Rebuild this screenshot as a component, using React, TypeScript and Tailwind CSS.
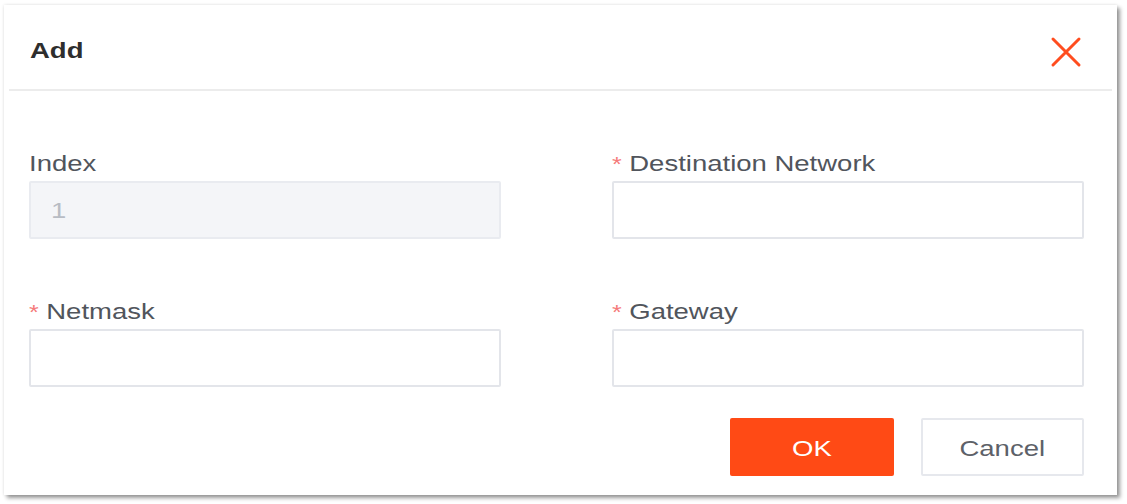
import React from "react";

const font = { fontFamily: '"Liberation Sans", Arial, sans-serif' };

interface FieldProps {
  label: string;
  required?: boolean;
  value?: string;
  disabled?: boolean;
}

const Wide = ({ children, center }: { children: React.ReactNode; center?: boolean }) => (
  <span className={`inline-block scale-x-[1.25] ${center ? "origin-center" : "origin-left"}`}>
    {children}
  </span>
);

const Field = ({ label, required, value, disabled }: FieldProps) => (
  <div className="flex flex-col">
    <label className="h-[26px] pt-[2px] text-[22px] leading-[26px] text-[#51555c] whitespace-nowrap">
      <Wide>
        {required && <span className="text-[#f57a7a] text-[20px] mr-[6px]">*</span>}
        {label}
      </Wide>
    </label>
    <div
      className={`mt-[6px] h-[58px] flex items-center pl-[20px] border-2 rounded-[2px] ${
        disabled ? "bg-[#f4f5f8] border-[#e9ebf0]" : "bg-white border-[#e3e5ea]"
      }`}
    >
      {value && (
        <span className="text-[22px] text-[#b8bcc4]">
          <Wide>{value}</Wide>
        </span>
      )}
    </div>
  </div>
);

const CloseIcon = () => (
  <svg width="32" height="32" viewBox="0 0 32 32" fill="none">
    <path d="M3 3 L29 29 M29 3 L3 29" stroke="#ff4d1f" strokeWidth="3" strokeLinecap="round" />
  </svg>
);

export default function App() {
  return (
    <div className="w-[1127px] h-[504px] bg-white overflow-hidden" style={font}>
      <div className="ml-[4px] mt-[5px] w-[1113px] h-[490px] bg-white shadow-[3px_3px_4px_rgba(0,0,0,0.4),0_0_3px_rgba(0,0,0,0.12)] flex flex-col">
        <div className="h-[84px] pt-[6px] pl-[26px] pr-[35px] flex items-center justify-between">
          <h2 className="text-[22px] font-bold text-[#2e2e2e]">
            <Wide>Add</Wide>
          </h2>
          <button className="mt-[4px]">
            <CloseIcon />
          </button>
        </div>
        <div className="mx-[5px] h-[2px] bg-[#ececec]" />

        <div className="pl-[25px] pr-[33px] pt-[58px] grid grid-cols-[472px_472px] justify-between gap-y-[58px]">
          <Field label="Index" value="1" disabled />
          <Field label="Destination Network" required />
          <Field label="Netmask" required />
          <Field label="Gateway" required />
        </div>

        <div className="pr-[33px] mt-[31px] flex justify-end gap-[27px]">
          <button className="w-[164px] h-[58px] pt-[3px] rounded-[2px] bg-[#ff4a15] text-white text-[22px]">
            <Wide center>OK</Wide>
          </button>
          <button className="w-[163px] h-[58px] pt-[3px] rounded-[2px] bg-white border-2 border-[#e6e8ed] text-[#5d6168] text-[22px]">
            <Wide center>Cancel</Wide>
          </button>
        </div>
      </div>
    </div>
  );
}
